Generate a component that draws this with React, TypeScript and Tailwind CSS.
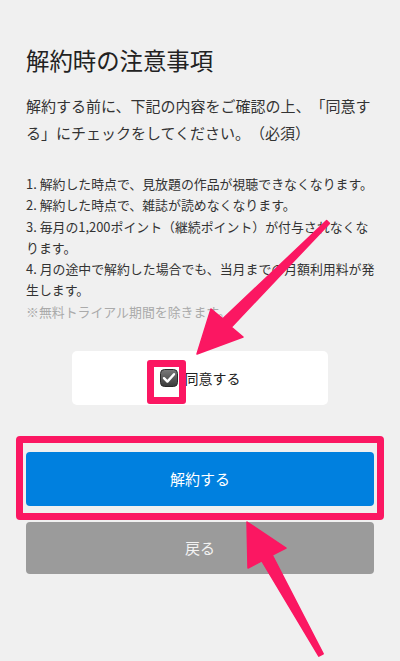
import React from "react";

const PINK = "#fb1762";

function CheckIcon() {
  return (
    <svg width="18" height="18" viewBox="0 0 18 18" className="shrink-0">
      <defs>
        <linearGradient id="cbg" x1="0" y1="0" x2="0" y2="1">
          <stop offset="0" stopColor="#7a7a7a" />
          <stop offset="1" stopColor="#3a3a3a" />
        </linearGradient>
      </defs>
      <rect x="0.5" y="0.5" width="17" height="17" rx="4" fill="url(#cbg)" stroke="#2a2a2a" />
      <path d="M4 9.2 L7.4 12.6 L14 5.2" fill="none" stroke="#ffffff" strokeWidth="2.4" strokeLinecap="round" strokeLinejoin="round" />
    </svg>
  );
}

export default function App() {
  return (
    <div
      className="relative w-[400px] h-[661px] overflow-hidden bg-[#f0f0f0] text-[#333] [text-spacing-trim:space-all]"
      style={{ fontFamily: '"Noto Sans CJK JP", "Noto Sans", sans-serif' }}
    >
      <div className="px-[26px] pt-[44px]">
        <h1 className="text-[23.4px] leading-[32px] text-[#222] font-normal">解約時の注意事項</h1>
        <p className="mt-[16px] text-[15px] leading-[27px] whitespace-nowrap">
          解約する前に、下記の内容をご確認の上、「同意す
          <br />
          る」にチェックをしてください。（必須）
        </p>
        <div className="mt-[27px] text-[12.9px] leading-[21.3px] whitespace-nowrap">
          <div>1. 解約した時点で、見放題の作品が視聴できなくなります。</div>
          <div>2. 解約した時点で、雑誌が読めなくなります。</div>
          <div>
            3. 毎月の1,200ポイント（継続ポイント）が付与されなくな
            <br />
            ります。
          </div>
          <div>
            4. 月の途中で解約した場合でも、当月までの月額利用料が発
            <br />
            生します。
          </div>
          <div className="text-[#aaaaaa]">※無料トライアル期間を除きます。</div>
        </div>
        <div className="mx-auto mt-[29px] w-[256px] h-[54px] rounded-[5px] bg-white flex items-center justify-center gap-[7px]">
          <CheckIcon />
          <span className="text-[14px] text-[#222]">同意する</span>
        </div>
        <button className="mt-[47px] w-full h-[54px] rounded-[4px] bg-[#0080df] text-white text-[15px] flex items-center justify-center">
          解約する
        </button>
        <button className="mt-[16px] w-full h-[52px] rounded-[4px] bg-[#9b9b9b] text-[#f2f2f2] text-[15px] flex items-center justify-center">
          戻る
        </button>
      </div>

      {/* annotation highlights */}
      <div className="absolute left-[147px] top-[360px] w-[39px] h-[44px] rounded-[3px] border-[7px] border-[#fb1762]" />
      <div className="absolute left-[16px] top-[436px] w-[368px] h-[84px] rounded-[4px] border-[7px] border-[#fb1762]" />

      {/* arrows */}
      <svg className="absolute left-0 top-0 pointer-events-none" width="400" height="661" viewBox="0 0 400 661">
        <polygon
          points="197,354 211,309 222.8,318.8 326.6,220.6 329.4,223.4 231.2,327.2 243,337"
          fill={PINK}
          stroke={PINK}
          strokeWidth="1.5"
          strokeLinejoin="round"
        />
        <polygon
          points="247,522 286,548 272.2,555.1 323.2,653.8 318.8,656.2 261.8,560.9 248,568"
          fill={PINK}
          stroke={PINK}
          strokeWidth="1.5"
          strokeLinejoin="round"
        />
      </svg>
    </div>
  );
}
